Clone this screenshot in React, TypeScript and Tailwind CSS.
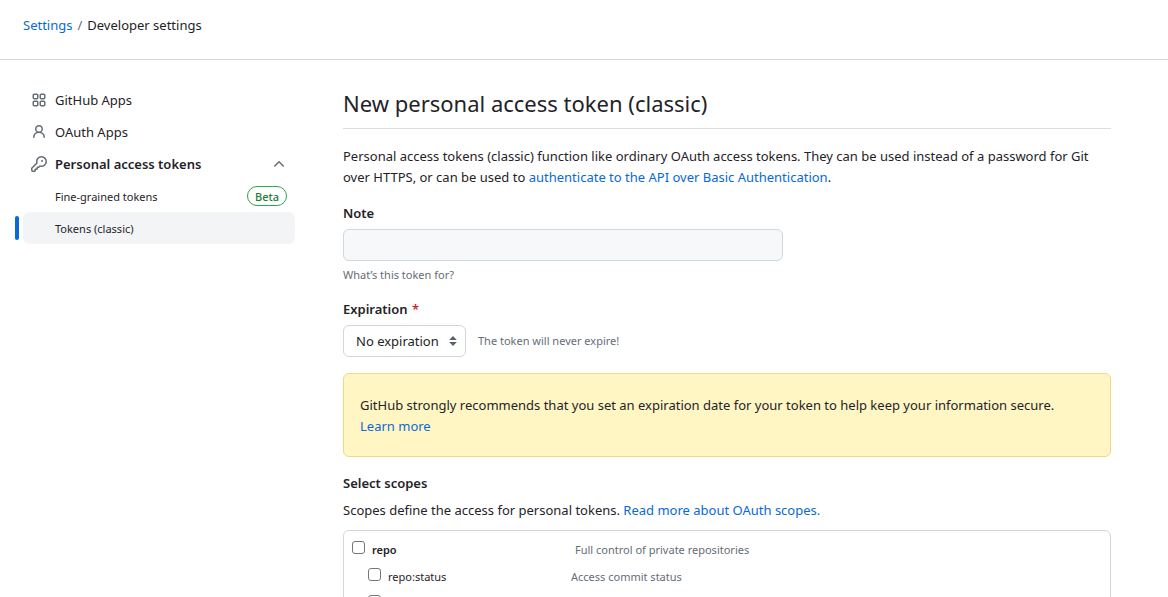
import type { ReactNode } from "react";

function Octicon({ d }: { d: string }) {
  return (
    <svg
      viewBox="0 0 16 16"
      className="h-4 w-4 shrink-0 fill-[#656d76]"
      aria-hidden="true"
    >
      <path d={d} />
    </svg>
  );
}

const APPS =
  "M1.5 3.25c0-.966.784-1.75 1.75-1.75h2.5c.966 0 1.75.784 1.75 1.75v2.5A1.75 1.75 0 0 1 5.75 7.5h-2.5A1.75 1.75 0 0 1 1.5 5.75Zm7 0c0-.966.784-1.75 1.75-1.75h2.5c.966 0 1.75.784 1.75 1.75v2.5a1.75 1.75 0 0 1-1.75 1.75h-2.5A1.75 1.75 0 0 1 8.5 5.75Zm-7 7c0-.966.784-1.75 1.75-1.75h2.5c.966 0 1.75.784 1.75 1.75v2.5a1.75 1.75 0 0 1-1.75 1.75h-2.5a1.75 1.75 0 0 1-1.75-1.75Zm7 0c0-.966.784-1.75 1.75-1.75h2.5c.966 0 1.75.784 1.75 1.75v2.5a1.75 1.75 0 0 1-1.75 1.75h-2.5a1.75 1.75 0 0 1-1.75-1.75ZM3.25 3a.25.25 0 0 0-.25.25v2.5c0 .138.112.25.25.25h2.5A.25.25 0 0 0 6 5.75v-2.5A.25.25 0 0 0 5.75 3Zm7 0a.25.25 0 0 0-.25.25v2.5c0 .138.112.25.25.25h2.5a.25.25 0 0 0 .25-.25v-2.5a.25.25 0 0 0-.25-.25Zm-7 7a.25.25 0 0 0-.25.25v2.5c0 .138.112.25.25.25h2.5a.25.25 0 0 0 .25-.25v-2.5a.25.25 0 0 0-.25-.25Zm7 0a.25.25 0 0 0-.25.25v2.5c0 .138.112.25.25.25h2.5a.25.25 0 0 0 .25-.25v-2.5a.25.25 0 0 0-.25-.25Z";
const PERSON =
  "M10.561 8.073a6.005 6.005 0 0 1 3.432 5.142.75.75 0 1 1-1.498.07 4.5 4.5 0 0 0-8.99 0 .75.75 0 0 1-1.498-.07 6.004 6.004 0 0 1 3.431-5.142 3.999 3.999 0 1 1 5.123 0ZM10.5 5a2.5 2.5 0 1 0-5 0 2.5 2.5 0 0 0 5 0Z";
const KEY =
  "M10.5 0a5.499 5.499 0 1 1-1.288 10.848l-.932.932a.749.749 0 0 1-.53.22H7v.75a.749.749 0 0 1-.22.53l-.5.5a.749.749 0 0 1-.53.22H5v.75a.749.749 0 0 1-.22.53l-.5.5a.749.749 0 0 1-.53.22h-2A1.75 1.75 0 0 1 0 14.25v-2c0-.199.079-.389.22-.53l4.932-4.932A5.5 5.5 0 0 1 10.5 0Zm-4 5.5c-.001.431.069.86.205 1.269a.75.75 0 0 1-.181.768L1.5 12.56v1.69c0 .138.112.25.25.25h1.69l.06-.06v-1.19a.75.75 0 0 1 .75-.75h1.19l.06-.06v-1.19a.75.75 0 0 1 .75-.75h1.19l1.023-1.025a.75.75 0 0 1 .768-.18A4 4 0 1 0 6.5 5.5ZM11 6a1 1 0 1 1 0-2 1 1 0 0 1 0 2Z";
const CHEVRON_UP =
  "M3.22 10.53a.749.749 0 0 1 0-1.06l4.25-4.25a.749.749 0 0 1 1.06 0l4.25 4.25a.749.749 0 1 1-1.06 1.06L8 6.811 4.28 10.53a.749.749 0 0 1-1.06 0Z";

function TextLink({ children }: { children: ReactNode }) {
  return (
    <a href="#" className="text-[#0969da] hover:underline">
      {children}
    </a>
  );
}

function Sidebar() {
  const row = "flex h-8 w-full items-center gap-2 rounded-md px-2 text-left";
  return (
    <nav aria-label="Developer settings" className="w-[272px] shrink-0">
      <ul>
        <li>
          <a href="#" className={row}>
            <Octicon d={APPS} />
            GitHub Apps
          </a>
        </li>
        <li>
          <a href="#" className={row}>
            <Octicon d={PERSON} />
            OAuth Apps
          </a>
        </li>
        <li>
          <button type="button" aria-expanded="true" className={row}>
            <Octicon d={KEY} />
            <span className="flex-1 font-semibold">Personal access tokens</span>
            <Octicon d={CHEVRON_UP} />
          </button>
          <ul className="text-[11px]">
            <li>
              <a
                href="#"
                className="flex h-8 items-center justify-between rounded-md pr-2 pl-8"
              >
                Fine-grained tokens
                <span className="flex h-5 items-center rounded-full border border-[#2da44e] px-[7px] font-medium text-[#1a7f37]">
                  Beta
                </span>
              </a>
            </li>
            <li className="relative">
              <span className="absolute top-1 -left-2 h-6 w-1 rounded-md bg-[#0969da]" />
              <a
                href="#"
                aria-current="page"
                className="flex h-8 items-center rounded-md bg-[#f3f4f6] pr-2 pl-8"
              >
                Tokens (classic)
              </a>
            </li>
          </ul>
        </li>
      </ul>
    </nav>
  );
}

const subScopes = [
  { name: "repo:status", about: "Access commit status" },
  { name: "repo_deployment", about: "Access deployment status" },
];

const box =
  "h-[13px] w-[13px] shrink-0 appearance-none rounded-[3px] border border-[#767676] bg-white checked:bg-[#0969da]";

function Scopes() {
  return (
    <div className="mt-[9px] rounded-md border border-[#d0d7de] px-2 pt-[10px] text-[11px] leading-[18px]">
      <div className="flex h-[27px] items-start">
        <label className="flex w-[223px] gap-[7px] font-semibold">
          <input type="checkbox" className={box} />
          repo
        </label>
        <span className="text-[#656d76]">Full control of private repositories</span>
      </div>
      {subScopes.map((scope) => (
        <div key={scope.name} className="flex h-[27px] items-start pl-4">
          <label className="flex w-[203px] gap-[7px]">
            <input type="checkbox" className={box} />
            {scope.name}
          </label>
          <span className="text-[#656d76]">{scope.about}</span>
        </div>
      ))}
    </div>
  );
}

export default function App() {
  return (
    <div className="h-screen overflow-hidden bg-white font-['Noto_Sans','Open_Sans',sans-serif] text-[13px] leading-[21px] text-[#1f2328]">
      <header className="h-[60px] border-b border-[#d0d7de] px-[23px] pt-[15px]">
        <nav aria-label="Breadcrumb" className="flex gap-[5px]">
          <TextLink>Settings</TextLink>
          <span className="text-[#656d76]">/</span>
          <span>Developer settings</span>
        </nav>
      </header>

      <div className="flex gap-12 pt-6 pr-[57px] pl-[23px]">
        <Sidebar />
        <main className="min-w-0 flex-1">
          <h1 className="border-b border-[#d8dee4] pb-[6px] text-[22px] leading-[38px]">
            New personal access token (classic)
          </h1>
          <p className="mt-[17px]">
            Personal access tokens (classic) function like ordinary OAuth access
            tokens. They can be used instead of a password for Git over HTTPS, or
            can be used to{" "}
            <TextLink>authenticate to the API over Basic Authentication</TextLink>.
          </p>

          <form>
            <label htmlFor="note" className="mt-[15px] block font-semibold">
              Note
            </label>
            <input
              id="note"
              type="text"
              aria-describedby="note-hint"
              className="mt-[5px] block h-8 w-[440px] rounded-md border border-[#d0d7de] bg-[#f6f8fa] px-3"
            />
            <p id="note-hint" className="mt-1 text-[11px] leading-5 text-[#656d76]">
              What’s this token for?
            </p>

            <label htmlFor="expiration" className="mt-[14px] block font-semibold">
              Expiration <span className="ml-px text-[#d1242f]">*</span>
            </label>
            <div className="mt-[5px] flex items-center gap-3">
              <div className="relative">
                <select
                  id="expiration"
                  className="block h-8 w-[123px] appearance-none rounded-md border border-[#d0d7de] bg-white pr-6 pl-3"
                >
                  <option>No expiration</option>
                </select>
                <svg
                  viewBox="0 0 8 10"
                  className="pointer-events-none absolute top-[11px] right-[9px] h-[10px] w-2 fill-[#57606a]"
                  aria-hidden="true"
                >
                  <path d="M4 0 7.8 4H.2ZM4 10 .2 6h7.6Z" />
                </svg>
              </div>
              <span className="text-[11px] leading-5 text-[#656d76]">
                The token will never expire!
              </span>
            </div>

            <div className="mt-4 rounded-md border border-[#eed888] bg-[#fff6c4] px-4 pt-[21px] pb-[19px]">
              <p>
                GitHub strongly recommends that you set an expiration date for your
                token to help keep your information secure.
                <br />
                <TextLink>Learn more</TextLink>
              </p>
            </div>

            <h2 className="mt-4 font-semibold">Select scopes</h2>
            <p className="mt-[6px]">
              Scopes define the access for personal tokens.{" "}
              <TextLink>Read more about OAuth scopes.</TextLink>
            </p>
            <Scopes />
          </form>
        </main>
      </div>
    </div>
  );
}
